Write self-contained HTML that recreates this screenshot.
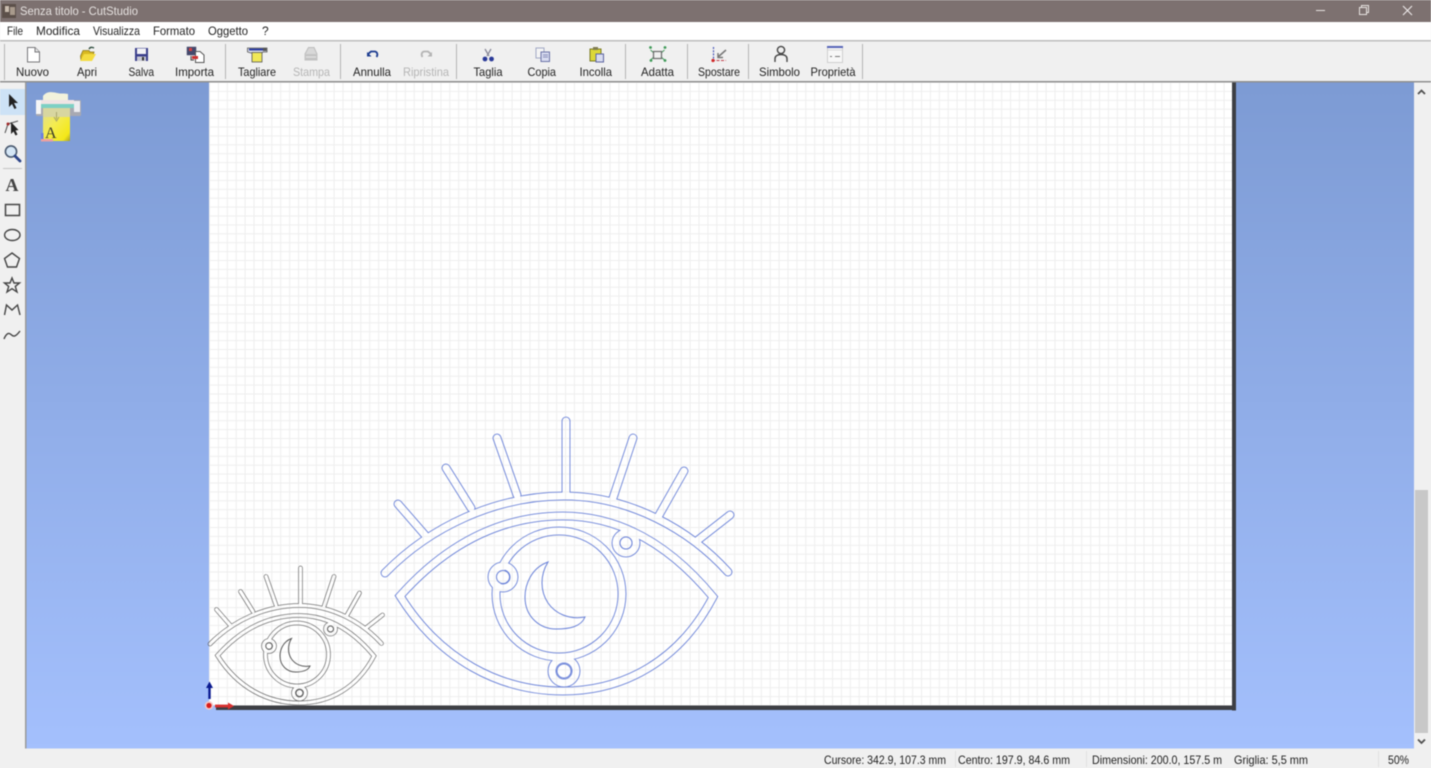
<!DOCTYPE html>
<html lang="it">
<head>
<meta charset="utf-8">
<title>Senza titolo - CutStudio</title>
<style>
html,body{margin:0;padding:0;width:1431px;height:768px;overflow:hidden;background:#f0f0f0}
svg{display:block;position:absolute;left:0;top:0;filter:blur(.4px)}
text{font-family:"Liberation Sans",sans-serif;font-size:12px;fill:#222}
.t{font-size:11.6px}
</style>
</head>
<body>
<svg width="1431" height="768" viewBox="0 0 1431 768" xmlns="http://www.w3.org/2000/svg">
<defs>
<linearGradient id="bg" x1="0" y1="82" x2="0" y2="748" gradientUnits="userSpaceOnUse">
<stop offset="0" stop-color="#7d9bd4"/><stop offset="1" stop-color="#a4c0fd"/>
</linearGradient>
<linearGradient id="yel" x1="0" y1="0" x2="1" y2="1">
<stop offset="0" stop-color="#e0dc90"/><stop offset=".45" stop-color="#f4ec50"/><stop offset=".85" stop-color="#f4e818"/><stop offset="1" stop-color="#a8a028"/>
</linearGradient>
<pattern id="grid" width="8.9" height="8.9" patternUnits="userSpaceOnUse" x="209" y="705">
<rect width="8.9" height="8.9" fill="#fff"/>
<path d="M0.5 0V8.9M0 0.5H8.9" stroke="#eeeeee" stroke-width="1" fill="none"/>
</pattern>
<g id="bands" fill="none" stroke-linecap="round" stroke-linejoin="miter">
<path d="M385 573C430 527 495 496 564 496C630 496 690 530 728 572"/>
<path d="M398 504L425 535M446 468L471 508M497 438L517 495M566 421V495M633 438L613 498M684 471L658 517M730 515L698 540"/>
<path d="M400 596C450 540 505 516 563 516C620 516 670 545 713 597C680 660 625 691 563 691C500 691 440 660 400 596Z"/>
<circle cx="559" cy="594" r="63"/>
<circle cx="503" cy="577" r="11"/>
<circle cx="626" cy="543" r="10"/>
<circle cx="564" cy="671" r="12"/>
</g>
<g id="holes">
<circle cx="503" cy="577" r="6.5"/>
<circle cx="626" cy="543" r="6"/>
<circle cx="564" cy="671" r="7"/>
</g>
<mask id="mBig" maskUnits="userSpaceOnUse" x="340" y="400" width="440" height="320">
<rect x="340" y="400" width="440" height="320" fill="#fff"/>
<use href="#bands" stroke="#000" stroke-width="7"/>
<use href="#holes" fill="#000"/>
</mask>
<mask id="mSmall" maskUnits="userSpaceOnUse" x="340" y="400" width="440" height="320">
<rect x="340" y="400" width="440" height="320" fill="#fff"/>
<use href="#bands" stroke="#000" stroke-width="6.6"/>
<use href="#holes" fill="#000"/>
</mask>
</defs>

<!-- window chrome -->
<rect width="1431" height="768" fill="#f0f0f0"/>
<rect width="1431" height="22" fill="#7d7170"/>
<rect x="2" y="4" width="14" height="14" fill="#5c504a"/>
<rect x="5" y="6" width="4" height="6" fill="#c9bcae"/>
<rect x="10" y="7" width="5" height="8" fill="#a89a8c"/>
<text x="20" y="15" textLength="118" lengthAdjust="spacingAndGlyphs" style="fill:#e6e2e0">Senza titolo - CutStudio</text>
<path d="M1316 10.5H1325" stroke="#e8e4e2" stroke-width="1"/>
<path d="M1359.5 7.5H1366.5V14.5H1359.5ZM1361.5 7.5V5.5H1368.5V12.5H1366.5" stroke="#e8e4e2" stroke-width="1" fill="none"/>
<path d="M1403 6L1412 15M1412 6L1403 15" stroke="#eeeaea" stroke-width="1.1"/>

<rect y="22" width="1431" height="18" fill="#fff"/>
<text x="7" y="35" textLength="16" lengthAdjust="spacingAndGlyphs">File</text>
<text x="36" y="35" textLength="44" lengthAdjust="spacingAndGlyphs">Modifica</text>
<text x="93" y="35" textLength="47" lengthAdjust="spacingAndGlyphs">Visualizza</text>
<text x="153" y="35" textLength="42" lengthAdjust="spacingAndGlyphs">Formato</text>
<text x="208" y="35" textLength="40" lengthAdjust="spacingAndGlyphs">Oggetto</text>
<text x="262" y="35">?</text>
<rect y="40" width="1431" height="1.5" fill="#bdbdbd"/>
<rect y="41.5" width="1431" height="40" fill="#f0f0f0"/>
<rect y="81" width="1431" height="1.6" fill="#8f8f8f"/>

<!-- toolbar separators -->
<g fill="#b4b4b4">
<rect x="4" y="44" width="1" height="36"/>
<rect x="225" y="44" width="1" height="35"/>
<rect x="340" y="44" width="1" height="35"/>
<rect x="456" y="44" width="1" height="35"/>
<rect x="625" y="44" width="1" height="35"/>
<rect x="687" y="44" width="1" height="35"/>
<rect x="748" y="44" width="1" height="35"/>
<rect x="862" y="44" width="1" height="35"/>
</g>

<!-- toolbar labels -->
<g>
<text class="t" x="16" y="76" textLength="33" lengthAdjust="spacingAndGlyphs">Nuovo</text>
<text class="t" x="77" y="76" textLength="20" lengthAdjust="spacingAndGlyphs">Apri</text>
<text class="t" x="128.5" y="76" textLength="25.5" lengthAdjust="spacingAndGlyphs">Salva</text>
<text class="t" x="175" y="76" textLength="39" lengthAdjust="spacingAndGlyphs">Importa</text>
<text class="t" x="238" y="76" textLength="38" lengthAdjust="spacingAndGlyphs">Tagliare</text>
<text class="t" x="293" y="76" textLength="37" lengthAdjust="spacingAndGlyphs" style="fill:#b5b5b5">Stampa</text>
<text class="t" x="353" y="76" textLength="38" lengthAdjust="spacingAndGlyphs">Annulla</text>
<text class="t" x="403" y="76" textLength="46" lengthAdjust="spacingAndGlyphs" style="fill:#b5b5b5">Ripristina</text>
<text class="t" x="473.5" y="76" textLength="29" lengthAdjust="spacingAndGlyphs">Taglia</text>
<text class="t" x="527.5" y="76" textLength="28.5" lengthAdjust="spacingAndGlyphs">Copia</text>
<text class="t" x="579.5" y="76" textLength="32.5" lengthAdjust="spacingAndGlyphs">Incolla</text>
<text class="t" x="641" y="76" textLength="33" lengthAdjust="spacingAndGlyphs">Adatta</text>
<text class="t" x="698" y="76" textLength="42" lengthAdjust="spacingAndGlyphs">Spostare</text>
<text class="t" x="759" y="76" textLength="41" lengthAdjust="spacingAndGlyphs">Simbolo</text>
<text class="t" x="810.5" y="76" textLength="45" lengthAdjust="spacingAndGlyphs">Proprietà</text>
</g>

<!-- toolbar icons -->
<!-- Nuovo -->
<path d="M27.5 47.5H35L39.5 52V62H27.5Z" fill="#fff" stroke="#77777a"/>
<path d="M35 47.5V52H39.5" fill="#e4e4e4" stroke="#77777a"/>
<!-- Apri -->
<path d="M80.5 56L83 50.5H89L90 52H94L91.5 60.5H81Z" fill="#d8b820" stroke="#8a7a20" stroke-width=".8"/>
<path d="M80 61L84 54H96L92 61Z" fill="#f4dc40"/>
<path d="M89 49C90 47 92 47 94 48" stroke="#2c4a3c" stroke-width="1.4" fill="none"/>
<!-- Salva -->
<rect x="135" y="48" width="13" height="13" fill="#3b3f8c"/>
<rect x="137" y="48.5" width="9" height="5.5" fill="#f2f2f6"/>
<rect x="137" y="56.5" width="9" height="4.5" fill="#c8c8d4"/>
<rect x="142" y="57" width="2" height="3.5" fill="#333"/>
<!-- Importa -->
<rect x="187" y="47" width="9" height="8" fill="#44486c" stroke="#44486c" stroke-width=".5"/>
<rect x="189" y="48" width="3" height="3" fill="#d84040"/>
<path d="M195.5 51.5H200L204 55V62.5H195.5Z" fill="#fff" stroke="#555"/>
<rect x="192" y="56" width="6" height="3" fill="#cc3030"/>
<path d="M191 56V60H194" stroke="#444" fill="none"/>
<!-- Tagliare -->
<path d="M247.5 48H267V52H263L262 53H251L247.5 52Z" fill="#d8dce8" stroke="#555" stroke-width=".8"/>
<rect x="249" y="48.5" width="14" height="2" fill="#2c3ca0"/>
<rect x="263" y="48" width="3.5" height="3" fill="#555"/>
<rect x="252" y="52.5" width="10" height="9.5" fill="#f0e858" stroke="#555" stroke-width=".8"/>
<!-- Stampa -->
<path d="M305 54L308.5 47.5H314L317 54V60H305Z" fill="#d8d8d8" stroke="#bcbcbc"/>
<rect x="304.5" y="54" width="13" height="6" fill="#c4c4c4"/>
<path d="M306 57H316" stroke="#e8e8e8"/>
<!-- Annulla -->
<path d="M368 54L371 51.5H375C377.5 52 378 55 376.5 57" stroke="#1c3c90" stroke-width="1.8" fill="none"/>
<path d="M367 52V56.5H371.5Z" fill="#1c3c90"/>
<!-- Ripristina -->
<path d="M431 54L428 51.5H424C421.5 52 421 55 422.5 57" stroke="#b4b4b4" stroke-width="1.8" fill="none"/>
<path d="M432 52V56.5H427.5Z" fill="#b4b4b4"/>
<!-- Taglia -->
<path d="M485 49L489 56M491 49L487 56" stroke="#8a8a9a" stroke-width="1.3" fill="none"/>
<circle cx="485" cy="59" r="2.4" fill="#2a3a98"/>
<circle cx="491.5" cy="59" r="2.4" fill="#2a3a98"/>
<!-- Copia -->
<rect x="536" y="48" width="8" height="10" fill="#f4f4f4" stroke="#a0a8c4"/>
<rect x="541" y="52" width="8.5" height="9.5" fill="#d8dcf0" stroke="#6c74a8"/>
<path d="M543 55H548M543 57H548" stroke="#6c74a8" stroke-width=".8"/>
<!-- Incolla -->
<rect x="590" y="49" width="11" height="12" fill="#dcd838" stroke="#7a7a28"/>
<rect x="593" y="47" width="5" height="3" fill="#807c50"/>
<rect x="596" y="54" width="7.5" height="8" fill="#d8dcf0" stroke="#5c64a0"/>
<!-- Adatta -->
<g fill="none" stroke="#4c9a64" stroke-width="1.1">
<path d="M650.5 50L654 53M664.5 50L661 53M650.5 60L654 57M664.5 60L661 57"/>
</g>
<rect x="653.5" y="51.5" width="8" height="7" fill="none" stroke="#6a6a6a" stroke-width="1.2"/>
<g fill="#3f9a58"><circle cx="650.5" cy="47.5" r="1.4"/><circle cx="665" cy="47.5" r="1.4"/><circle cx="651" cy="60.5" r="1.4"/><circle cx="665" cy="60.5" r="1.4"/></g>
<!-- Spostare -->
<path d="M713.5 47V61" stroke="#4a58b8" stroke-width="1.2" stroke-dasharray="2 1.2"/>
<path d="M712 60.5H726" stroke="#c03c48" stroke-width="1.1" stroke-dasharray="3 1.5"/>
<circle cx="713" cy="60.5" r="1.6" fill="#d02828"/>
<path d="M726 50L718 57M718 53V57.5H723" stroke="#777" stroke-width="1.5" fill="none"/>
<!-- Simbolo -->
<circle cx="781" cy="50" r="3.6" fill="none" stroke="#444" stroke-width="1.4"/>
<path d="M775 62V58.5C775 56 777.5 54.5 781 54.5C784.5 54.5 787 56 787 58.5V62" fill="none" stroke="#444" stroke-width="1.4"/>
<!-- Proprieta -->
<rect x="827.5" y="46.5" width="15" height="16" fill="#f7f7f7" stroke="#cfcfcf"/>
<rect x="827" y="46" width="16" height="2" fill="#5664b8"/>
<path d="M830 56.5H832M835 56.5H840" stroke="#777"/>
<path d="M828 50H842" stroke="#d8d8d8"/>

<!-- workspace -->
<rect x="26" y="82.5" width="1388" height="666" fill="url(#bg)"/>
<rect x="209" y="82.5" width="1023" height="623" fill="url(#grid)"/>
<rect x="1232" y="82.5" width="4" height="628" fill="#3d3f44"/>
<rect x="216" y="705.5" width="1020" height="4.5" fill="#3d3f44"/>

<!-- large blue eye -->
<use href="#bands" stroke="#6a82d8" stroke-width="8.8" mask="url(#mBig)"/>
<g fill="none" stroke="#6a82d8" stroke-width="1">
<use href="#holes"/>
<path d="M548 562C531 568 525 585 525 597C525 617 540 629 556 629C569 629 581 627 585 617C568 620 555 613 548 603C540 591 540 575 548 562Z"/>
</g>

<!-- small grey eye -->
<g transform="translate(17.5 357.5) scale(.5)">
<use href="#bands" stroke="#5a5a5a" stroke-width="9" mask="url(#mSmall)"/>
<g fill="none" stroke="#5a5a5a" stroke-width="2">
<use href="#holes"/>
<path d="M548 562C531 568 525 585 525 597C525 617 540 629 556 629C569 629 581 627 585 617C568 620 555 613 548 603C540 591 540 575 548 562Z"/>
</g>
</g>

<!-- origin marker -->
<path d="M209.5 699V686" stroke="#0a1a90" stroke-width="2.4"/>
<path d="M206 688L209.5 681.5L213 688Z" fill="#0a1a90"/>
<path d="M215 706H229" stroke="#d83030" stroke-width="2.8"/>
<path d="M228 702.5L234 706L228 709.5Z" fill="#d83030"/>
<circle cx="209" cy="705.5" r="4.2" fill="#f4c8c8"/>
<circle cx="209" cy="705.5" r="2.6" fill="#d81c1c"/>

<!-- printer icon -->
<path d="M43 96C47 91 52 92 57 93C61 94 64 93 68 94V103H43Z" fill="#f2f2dc"/>
<rect x="43" y="109" width="27" height="32" fill="url(#yel)"/>
<rect x="36" y="100" width="45" height="16" rx="1" fill="#a8a9b2"/>
<rect x="36" y="100" width="5" height="14" fill="#f6f6f6"/>
<rect x="74" y="101" width="6" height="11" fill="#ececf0"/>
<rect x="41" y="100" width="33" height="4" fill="#f0e4e4"/>
<rect x="41" y="104" width="33" height="4" fill="#7dd0c4"/>
<rect x="43" y="108" width="27" height="9" fill="#d8d6a0"/>
<path d="M56.5 112V119M54 117L56.5 121L59 117" stroke="#a8a56c" fill="none"/>
<text x="45" y="138" style="font-family:'Liberation Serif',serif;font-size:16px;fill:#3a3a2a">A</text>
<rect x="41" y="133" width="2.5" height="6" fill="#6c7ee0"/>
<rect x="41" y="139" width="12" height="2.5" fill="#eca0a0"/>

<!-- left toolbar -->
<rect x="0" y="82.5" width="25.5" height="666" fill="#f0f0f0"/>
<rect x="25" y="82.5" width="1.5" height="666" fill="#9a9a9a"/>
<rect x="0" y="89" width="25" height="26" fill="#cde2f6"/>
<!-- select -->
<path d="M9 94V107L12 104L14.5 109L16.5 108L14 103H18Z" fill="#222"/>
<!-- node -->
<path d="M5 133L8 124L18 121" fill="none" stroke="#555" stroke-width="1.1"/>
<circle cx="8" cy="124" r="1.5" fill="#a02828"/>
<path d="M11 122V134L13.5 131.5L15.5 135.5L17.5 134.5L15.5 130.5L18.5 130Z" fill="#222"/>
<!-- zoom -->
<circle cx="11" cy="151.5" r="5.6" fill="#d4e6f6" stroke="#4a5a70" stroke-width="1.6"/>
<path d="M15 156L20 161" stroke="#2c4488" stroke-width="2.8" stroke-linecap="round"/>
<rect x="3" y="168" width="19" height="1" fill="#c4c4c4"/>
<text x="12" y="191" text-anchor="middle" style="font-family:'Liberation Serif',serif;font-size:18px;font-weight:bold;fill:#444">A</text>
<rect x="5.5" y="204.5" width="14" height="11" fill="none" stroke="#444" stroke-width="1.5"/>
<ellipse cx="12.3" cy="235" rx="7.7" ry="5.5" fill="none" stroke="#444" stroke-width="1.4"/>
<path d="M12 253L19.5 258.5L16.5 267H7.5L4.5 258.5Z" fill="none" stroke="#444" stroke-width="1.4"/>
<path d="M12 278L14 283H19.5L15.3 286.4L17 292L12 288.7L7 292L8.7 286.4L4.5 283H10Z" fill="none" stroke="#444" stroke-width="1.4"/>
<path d="M4.5 315L6.5 305L12 310L17.5 305L20 315" fill="none" stroke="#444" stroke-width="1.4"/>
<path d="M4 339C6 334 8.5 332 11 334.5C13.5 337 15.5 337 20 331" fill="none" stroke="#444" stroke-width="1.4"/>

<!-- scrollbar -->
<rect x="1414" y="82.5" width="17" height="666" fill="#f0f0f0"/>
<rect x="1415" y="490" width="13" height="243" fill="#c8c8c8"/>
<path d="M1418 94L1421.5 90.5L1425 94" fill="none" stroke="#505050" stroke-width="1.8"/>
<path d="M1418 739.5L1421.5 743L1425 739.5" fill="none" stroke="#505050" stroke-width="1.8"/>

<!-- status bar -->
<rect y="748.5" width="1431" height="19.5" fill="#f0f0f0"/>
<rect x="955" y="751" width="1" height="16" fill="#e0e0e0"/>
<rect x="1086" y="751" width="1" height="16" fill="#e0e0e0"/>
<rect x="1378" y="751" width="1" height="16" fill="#e0e0e0"/>
<text x="824" y="764" textLength="122" lengthAdjust="spacingAndGlyphs">Cursore: 342.9, 107.3 mm</text>
<text x="958" y="764" textLength="112" lengthAdjust="spacingAndGlyphs">Centro: 197.9, 84.6 mm</text>
<text x="1092" y="764" textLength="130" lengthAdjust="spacingAndGlyphs">Dimensioni: 200.0, 157.5 m</text>
<text x="1234" y="764" textLength="74" lengthAdjust="spacingAndGlyphs">Griglia: 5,5 mm</text>
<text x="1388" y="764" textLength="21" lengthAdjust="spacingAndGlyphs">50%</text>
</svg>
</body>
</html>
